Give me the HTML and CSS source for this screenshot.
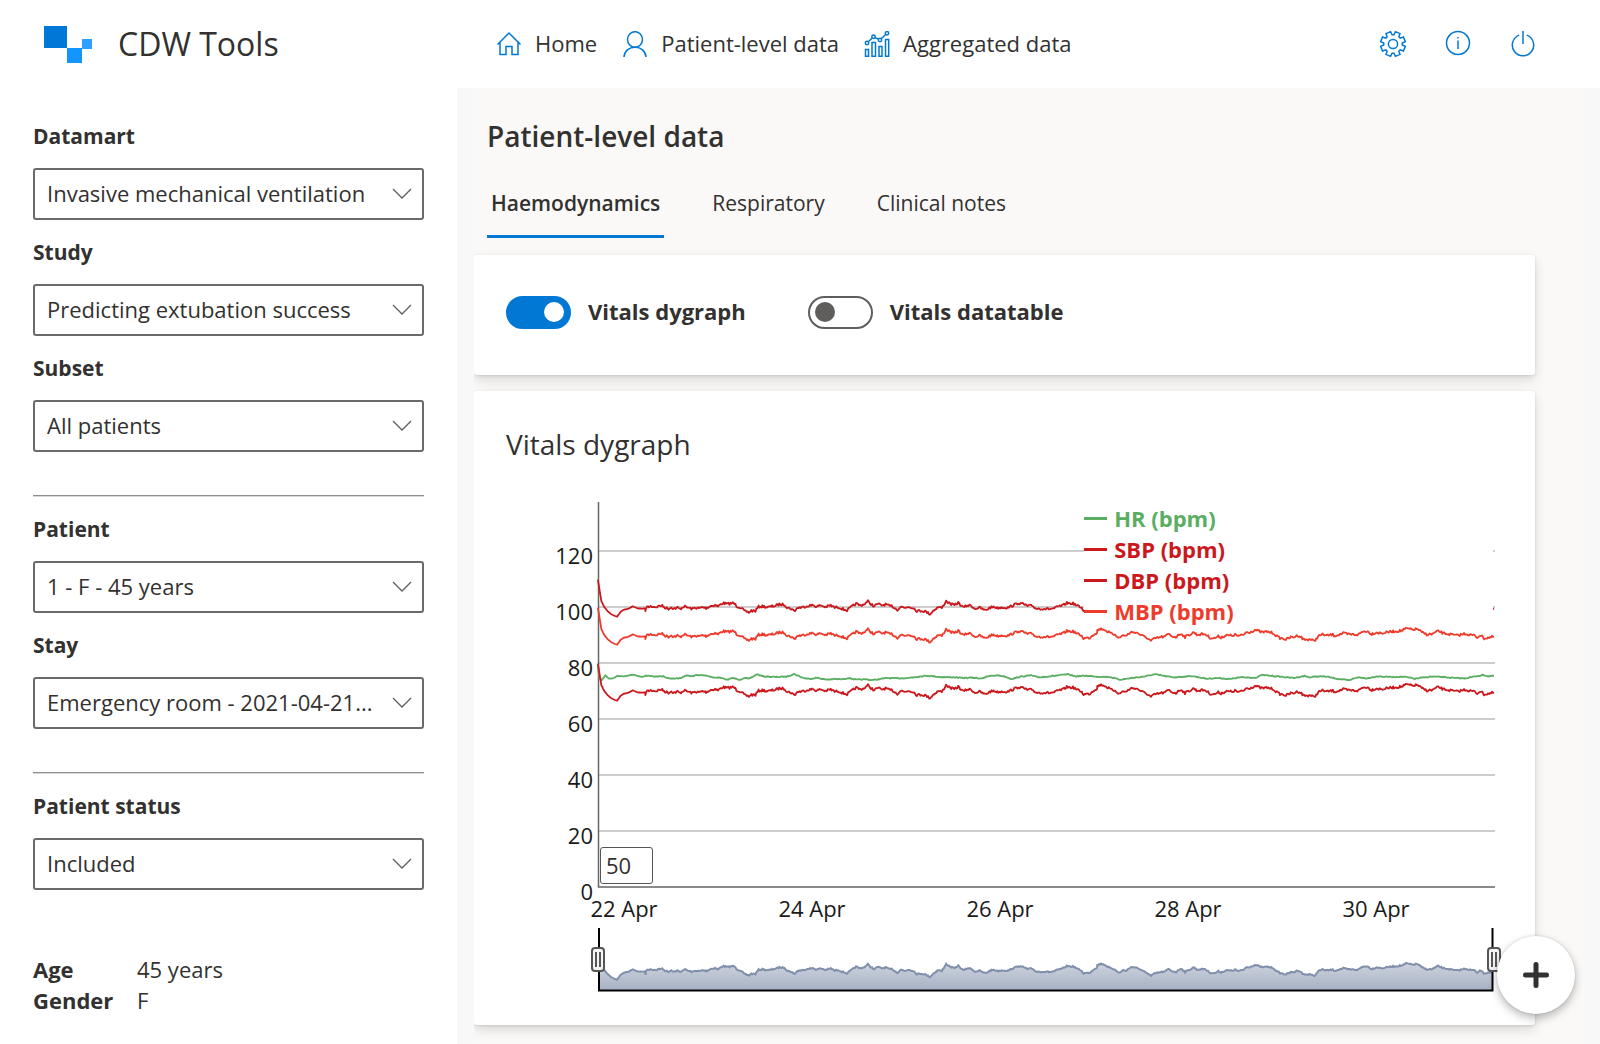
FILE: index.html
```html
<!DOCTYPE html>
<html lang="en">
<head>
<meta charset="utf-8">
<meta name="viewport" content="width=device-width, initial-scale=1">
<title>CDW Tools</title>
<link rel="stylesheet" href="styles.css">
</head>
<body>
<header class="topbar">
  <div class="brand">
    <svg class="logo" width="48" height="38" viewBox="0 0 48 38" aria-hidden="true">
      <rect x="0" y="1" width="23" height="22" fill="#0078d7"/>
      <rect x="23" y="23" width="15" height="15" fill="#1494ff"/>
      <rect x="38" y="14" width="10" height="10" fill="#2ea0ff"/>
    </svg>
    <span class="brand-name">CDW Tools</span>
  </div>
  <nav class="menu">
    <a class="menu-link" href="#home">
      <svg class="icon" width="26" height="26" viewBox="0 0 26 26" aria-hidden="true"><path d="M1.500 13.500 L13 2 L24.500 13.500 M4 11.500 V23.500 H10 V15.500 H16 V23.500 H22 V11.500"/></svg>
      <span>Home</span>
    </a>
    <a class="menu-link" href="#patient">
      <svg class="icon" width="26" height="26" viewBox="0 0 26 26" aria-hidden="true"><ellipse cx="13" cy="8.500" rx="7.500" ry="7.800"/><path d="M2 26 C2.500 20 7 16.300 13 16.300 S23.500 20 24 26"/></svg>
      <span>Patient-level data</span>
    </a>
    <a class="menu-link" href="#aggregated">
      <svg class="icon" width="26" height="26" viewBox="0 0 26 26" aria-hidden="true"><path d="M1.500 18.500 h3 v6.800 h-3z M8 11.500 h3.500 v13.800 h-3.500z M15 15.500 h3 v9.800 h-3z M21.500 8.500 h3.200 v16.800 h-3.200z"/><circle cx="3" cy="12" r="1.700"/><circle cx="9.500" cy="5.800" r="1.700"/><circle cx="16" cy="9" r="1.700"/><circle cx="23" cy="2.300" r="1.700"/><path d="M4.200 10.700 L8.300 7 M11 6.500 L14.500 8.200 M17.200 7.800 L21.800 3.500"/></svg>
      <span>Aggregated data</span>
    </a>
  </nav>
  <div class="actions">
    <button class="icon-button" type="button" aria-label="Settings">
      <svg class="icon" width="28" height="28" viewBox="-14 -14 28 28" aria-hidden="true"><path id="gear"/><circle r="4.600"/></svg>
    </button>
    <button class="icon-button" type="button" aria-label="Information">
      <svg class="icon" width="28" height="28" viewBox="-14 -13 28 28" aria-hidden="true"><circle r="11.500"/><path d="M0 -2.500 V6 M0 -6 V-4.500"/></svg>
    </button>
    <button class="icon-button" type="button" aria-label="Sign out">
      <svg class="icon" width="28" height="28" viewBox="-14 -14 28 28" aria-hidden="true"><path d="M0 -13 V0 M-3.800 -8.900 A10.700 10.700 0 1 0 3.800 -8.900"/></svg>
    </button>
  </div>
</header>

<div class="layout">
  <aside class="sidebar">
    <div class="field"><label for="datamart">Datamart</label><select id="datamart"><option>Invasive mechanical ventilation</option></select></div>
    <div class="field"><label for="study">Study</label><select id="study"><option>Predicting extubation success</option></select></div>
    <div class="field"><label for="subset">Subset</label><select id="subset"><option>All patients</option></select></div>
    <hr class="rule">
    <div class="field"><label for="patient">Patient</label><select id="patient"><option>1 - F - 45 years</option></select></div>
    <div class="field"><label for="stay">Stay</label><select id="stay"><option>Emergency room - 2021-04-21...</option></select></div>
    <hr class="rule">
    <div class="field"><label for="status">Patient status</label><select id="status"><option>Included</option></select></div>
    <dl class="facts">
      <dt>Age</dt><dd>45 years</dd>
      <dt>Gender</dt><dd>F</dd>
    </dl>
  </aside>

  <main class="content">
    <div class="panel">
      <h1 class="page-title">Patient-level data</h1>
      <div class="tabs" role="tablist">
        <button class="tab tab-active" type="button" role="tab" aria-selected="true">Haemodynamics</button>
        <button class="tab" type="button" role="tab" aria-selected="false">Respiratory</button>
        <button class="tab" type="button" role="tab" aria-selected="false">Clinical notes</button>
      </div>

      <section class="card toggles">
        <label class="switch"><input type="checkbox" checked><span>Vitals dygraph</span></label>
        <label class="switch"><input type="checkbox"><span>Vitals datatable</span></label>
      </section>

      <section class="card chart-card">
        <h2 class="card-title">Vitals dygraph</h2>
        <div class="chart">
          <svg class="plot" viewBox="0 0 997 500" role="img" aria-label="Vital signs over time">
            <defs>
              <linearGradient id="range-fill" x1="0" y1="431" x2="0" y2="493" gradientUnits="userSpaceOnUse">
                <stop offset="0" stop-color="#ffffff"/><stop offset="1" stop-color="#a7b1c4"/>
              </linearGradient>
              <clipPath id="range-clip"><rect x="93" y="431" width="894" height="63"/></clipPath>
            </defs>
            <g id="grid"></g>
            <path class="axis" d="M92.500 5 V390 H989"/>
            <path class="series green" id="hr"/>
            <path class="series crimson" id="sbp"/>
            <path class="series crimson" id="dbp"/>
            <path class="series tomato" id="mbp"/>
            <g id="dates"></g>
            <g clip-path="url(#range-clip)">
              <path id="range-area" fill="url(#range-fill)"/>
              <path id="range-line" class="range-line"/>
            </g>
            <path class="range-frame" d="M93 431 V493.500 H986.500 V431"/>
            <g id="handles"></g>
          </svg>
          <ul class="legend">
            <li class="green">HR (bpm)</li>
            <li class="crimson">SBP (bpm)</li>
            <li class="crimson">DBP (bpm)</li>
            <li class="tomato">MBP (bpm)</li>
          </ul>
          <input class="roller" type="text" value="50" aria-label="Rolling period">
        </div>
      </section>
    </div>
  </main>
</div>
<button class="fab" type="button" aria-label="Add">
  <svg width="26" height="26" viewBox="0 0 26 26" aria-hidden="true"><path d="M13 2.500 V23.500 M2.500 13 H23.500"/></svg>
</button>
<script src="chart.js"></script>
</body>
</html>
```

FILE: styles.css
```css
* { box-sizing: border-box; }
body {
  margin: 0;
  min-height: 100vh;
  display: flex;
  flex-direction: column;
  background: #f8f8f8;
  color: #323130;
  font: 22px/32px "Open Sans", "Noto Sans", sans-serif;
}
button, input, select { font: inherit; color: inherit; }

.topbar {
  display: grid;
  grid-template-columns: 457px 1fr auto;
  align-items: center;
  height: 88px;
  padding-right: 63px;
  background: #fff;
}
.brand { display: flex; align-items: center; gap: 26px; padding-left: 44px; }
.brand-name { font-size: 32px; font-weight: 500; }
.menu { display: flex; gap: 25px; padding-left: 39px; }
.menu-link { display: flex; align-items: center; gap: 13px; color: inherit; text-decoration: none; white-space: nowrap; }
.menu-link span { padding-bottom: 2px; }
.icon { display: block; flex: none; fill: none; stroke: #0078d4; stroke-width: 1.5; }
.actions { display: flex; gap: 37px; }
.icon-button { padding: 0; border: 0; background: none; }

.layout { flex: 1; display: grid; grid-template-columns: 457px 1fr; }
.sidebar { padding: 16px 33px 24px; background: #fff; }
.field label { display: block; padding: 16px 0; font-size: 21px; font-weight: 700; }
.field select {
  display: block;
  width: 100%;
  height: 52px;
  padding: 0 40px 2px 12px;
  border: 2px solid #6c6a68;
  border-radius: 3px;
  appearance: none;
  background: #fff url("data:image/svg+xml,%3Csvg xmlns='http://www.w3.org/2000/svg' width='20' height='12'%3E%3Cpath d='M1 1L10 10L19 1' fill='none' stroke='%23605e5c' stroke-width='1.3'/%3E%3C/svg%3E") no-repeat right 10px center;
}
.rule { height: 2px; margin: 43px 0 0; border: 0; border-top: 1px solid #8e8e8e; border-bottom: 1px solid #d8d8d8; }
.facts { display: grid; grid-template-columns: 104px 1fr; margin: 64px 0 0; line-height: 31px; }
.facts dt { font-weight: 700; }
.facts dd { margin: 0; }

.content { padding: 0 16px 0 17px; min-width: 0; }
.panel { height: 100%; padding: 28px 49px 20px 0; overflow: hidden; background: #faf9f8; }
.page-title { margin: 0; padding-left: 13px; font-size: 28px; line-height: 40px; font-weight: 600; }
.tabs { display: flex; gap: 44px; padding: 20px 0 17px 13px; }
.tab { height: 62px; padding: 0 4px 5px; border: 0; border-bottom: 3px solid transparent; background: none; font-size: 21px; }
.tab-active { border-color: #0078d4; font-weight: 600; }

.card { background: #fff; border-radius: 3px; box-shadow: 0 5px 12px rgba(0, 0, 0, .13), 0 1px 3px rgba(0, 0, 0, .11); }
.toggles { display: flex; gap: 62px; padding: 40px 32px 46px; }
.switch { display: flex; align-items: center; gap: 17px; font-weight: 700; }
.switch span { padding-bottom: 2px; }
.switch input {
  appearance: none;
  display: flex;
  align-items: center;
  width: 65px;
  height: 33px;
  margin: 0;
  padding: 0 5px;
  border: 2px solid #605e5c;
  border-radius: 17px;
}
.switch input::before { content: ""; width: 20px; height: 20px; border-radius: 50%; background: #605e5c; }
.switch input:checked { justify-content: flex-end; border-color: #0078d4; background: #0078d4; }
.switch input:checked::before { background: #fff; }

.chart-card { margin-top: 16px; padding: 32px 32px 28px; }
.card-title { margin: 0; font-size: 28px; line-height: 42px; font-weight: 400; }
.chart { position: relative; margin-top: 32px; }
.plot { display: block; width: 100%; overflow: visible; font-size: 22px; fill: #1a1a1a; }
.grid-line { stroke: #bcbcbc; stroke-width: 1.5; }
.axis { fill: none; stroke: #666; stroke-width: 1.5; }
.series { fill: none; stroke: currentColor; stroke-width: 1.8; stroke-linejoin: round; }
.green { color: #5aae61; }
.crimson { color: #cb181d; }
.tomato { color: #ef3b2c; }
.range-line { fill: none; stroke: #808fab; stroke-width: 2; }
.range-frame { fill: none; stroke: #000; stroke-width: 2; }
.handle { fill: #f4f4f4; stroke: #555; stroke-width: 2; }
.grip { stroke: #555; stroke-width: 2; }
.legend {
  position: absolute;
  top: 6px;
  right: 10px;
  width: 41%;
  margin: 0;
  padding: 0;
  list-style: none;
  background: #fff;
  font-weight: 700;
  line-height: 31px;
}
.legend li { display: flex; align-items: center; gap: 7px; }
.legend li::before { content: ""; width: 23px; height: 3px; background: currentColor; }
.roller {
  position: absolute;
  left: 94px;
  top: 350px;
  width: 53px;
  height: 37px;
  padding: 0 5px 2px;
  border: 1px solid #555;
  border-radius: 3px;
  background: #fff;
}

.fab {
  position: fixed;
  right: 25px;
  bottom: 30px;
  display: grid;
  place-items: center;
  width: 78px;
  height: 78px;
  border: 0;
  border-radius: 50%;
  background: #fff;
  box-shadow: 0 4px 10px rgba(0, 0, 0, .28), 0 0 3px rgba(0, 0, 0, .15);
}
.fab path { fill: none; stroke: #323130; stroke-width: 5; stroke-linecap: round; }
```

FILE: chart.js
```js
// Pressure curve, as x,y pairs; the second half uses a finer x step.
const pressureA = [162,380,172,445,180,462,190,475,200,484,208,488,216,491,226,476,235,470,248,467,260,460,272,466,285,467,294,466,295,478,297,463,310,460,325,462,340,457,350,464,360,467,368,463,375,467,385,464,392,468,403,460,412,463,427,468,435,464,445,466,455,463,465,465,478,459,490,456,498,460,512,450,525,453,542,450,552,460,563,464,573,475,585,478,592,473,603,474,612,461,625,460,638,463,650,460,660,458,670,454,685,455,692,464,703,467,712,474,722,464,735,463,750,458,765,457,775,461,785,457,800,462,814,457,825,464,835,462,845,467,860,472,872,462,885,452,895,457,907,454,918,445,927,453,936,460,945,453,957,457,970,454,978,460,985,459,1001,470,1010,461,1022,465,1030,461,1045,464,1055,474,1068,473,1078,475,1092,483,1102,472,1115,462,1125,465,1137,444,1148,452,1160,457,1171,449,1185,463,1197,457,1208,458,1217,467,1230,464,1247,472,1258,465,1270,461,1280,465,1295,463,1310,464,1325,457,1340,450,1355,454,1365,459,1378,458,1390,467,1410,467,1425,468,1440,466,1450,461,1465,457,1475,450,1495,452,1503,458,1515,463,1522,472,1540,470,1550,460,1560,454];
const pressureB = [112,448,120,444,130,444,140,450,155,459,165,460,178,471,190,462,198,465,210,455,225,453,238,459,252,467,262,471,273,480,283,473,295,470,305,468,315,467,325,459,335,465,348,468,363,457,375,468,385,463,402,454,410,461,420,460,435,459,450,470,463,472,475,466,483,469,500,463,515,464,525,461,535,465,550,462,558,454,570,453,585,447,598,451,608,454,622,452,640,456,650,466,660,471,678,475,692,469,703,468,713,463,722,467,730,475,742,476,750,474,763,481,775,465,790,460,800,464,815,461,825,464,850,457,865,460,895,461,905,453,920,450,935,459,950,454,965,457,985,453,1005,451,1025,449,1040,442,1055,446,1073,444,1085,454,1100,460,1115,460,1135,450,1150,457,1165,459,1190,464,1215,458,1228,461,1245,464,1252,470,1260,462,1272,472,1290,469,1302,467];
const heartA = [162,555,166,590,172,598,183,583,193,593,205,592,216,585,235,586,260,581,285,588,300,584,320,586,345,586,360,592,395,592,408,583,425,586,440,582,465,584,490,590,500,589,525,596,542,591,558,597,572,590,585,594,607,580,625,586,660,588,690,587,712,579,735,590,755,594,775,590,800,596,825,594,845,595,863,591,885,596,915,595,925,597,942,596,970,591,1000,592,1030,591,1050,588,1085,584,1120,588,1160,589,1185,591,1210,590,1235,592,1260,585,1280,583,1300,586,1320,594,1345,587,1375,583,1395,589,1425,586,1478,580,1500,586,1530,584,1560,587];
const heartB = [120,587,150,588,180,596,215,591,250,587,285,580,320,586,340,589,370,587,395,585,440,593,470,591,510,594,540,589,590,590,605,582,640,585,660,587,700,591,733,585,750,589,775,586,800,587,830,593,868,598,890,589,920,592,950,586,1000,588,1030,587,1065,593,1110,587,1150,588,1180,591,1215,592,1230,589,1270,582,1285,586,1302,584];

function join(a, b) {
  const points = [];
  for (let i = 0; i < a.length; i += 2) points.push([34 + a[i] / 2.8, a[i + 1] / 3 - 16]);
  for (let i = 0; i < b.length; i += 2) points.push([554 + b[i] / 3, b[i + 1] / 3 - 16]);
  return points;
}

// Resample to one reading per unit of x, with small beat-to-beat variation.
function trace(points, shift, noise) {
  let seed = 7;
  const random = () => { seed = (seed * 16807) % 2147483647; return seed / 2147483647 - 0.5; };
  let d = "";
  for (let i = 0; i < points.length - 1; i++) {
    const [x0, y0] = points[i], [x1, y1] = points[i + 1];
    const steps = Math.max(1, Math.round(x1 - x0));
    for (let s = 0; s < steps; s++) {
      const x = x0 + (x1 - x0) * s / steps;
      const jitter = x > 139 ? random() * noise : 0;
      d += (d ? "L" : "M") + x.toFixed(1) + " " + (y0 + (y1 - y0) * s / steps + shift + jitter).toFixed(1);
    }
  }
  const last = points[points.length - 1];
  return d + "L" + last[0].toFixed(1) + " " + (last[1] + shift).toFixed(1);
}

const byId = id => document.getElementById(id);
const pressure = join(pressureA, pressureB);
byId("hr").setAttribute("d", trace(join(heartA, heartB), 0, 0.9));
byId("mbp").setAttribute("d", trace(pressure, 0, 2.4));
byId("sbp").setAttribute("d", trace(pressure, -28, 2.4));
byId("dbp").setAttribute("d", trace(pressure, 56, 2.4));
const range = trace(pressure, 335, 1.2);
byId("range-line").setAttribute("d", range);
byId("range-area").setAttribute("d", range + "V493H92Z");

let grid = "";
[120, 100, 80, 60, 40, 20, 0].forEach((value, i) => {
  const y = 54 + i * 56;
  if (value) grid += `<line class="grid-line" x1="93" x2="989" y1="${y}" y2="${y}"/>`;
  grid += `<text x="87" y="${y + 13}" text-anchor="end">${value}</text>`;
});
byId("grid").innerHTML = grid;
byId("dates").innerHTML = [22, 24, 26, 28, 30].map((day, i) =>
  `<text x="${118 + i * 188}" y="420" text-anchor="middle">${day} Apr</text>`).join("");
byId("handles").innerHTML = [92, 988].map(x =>
  `<rect class="handle" x="${x - 6}" y="451" width="12" height="23" rx="3"/><path class="grip" d="M${x - 2} 455V470M${x + 2} 455V470"/>`).join("");

// Settings icon: eight teeth around the hub.
let gear = "";
for (let i = 0; i < 8; i++) {
  [[-0.29, 9.3], [-0.2, 12.6], [0.2, 12.6], [0.29, 9.3]].forEach(([offset, r]) => {
    const a = (i + 0.5) * Math.PI / 4 + offset;
    gear += (gear ? "L" : "M") + (r * Math.cos(a)).toFixed(2) + " " + (r * Math.sin(a)).toFixed(2);
  });
}
byId("gear").setAttribute("d", gear + "Z");
```
